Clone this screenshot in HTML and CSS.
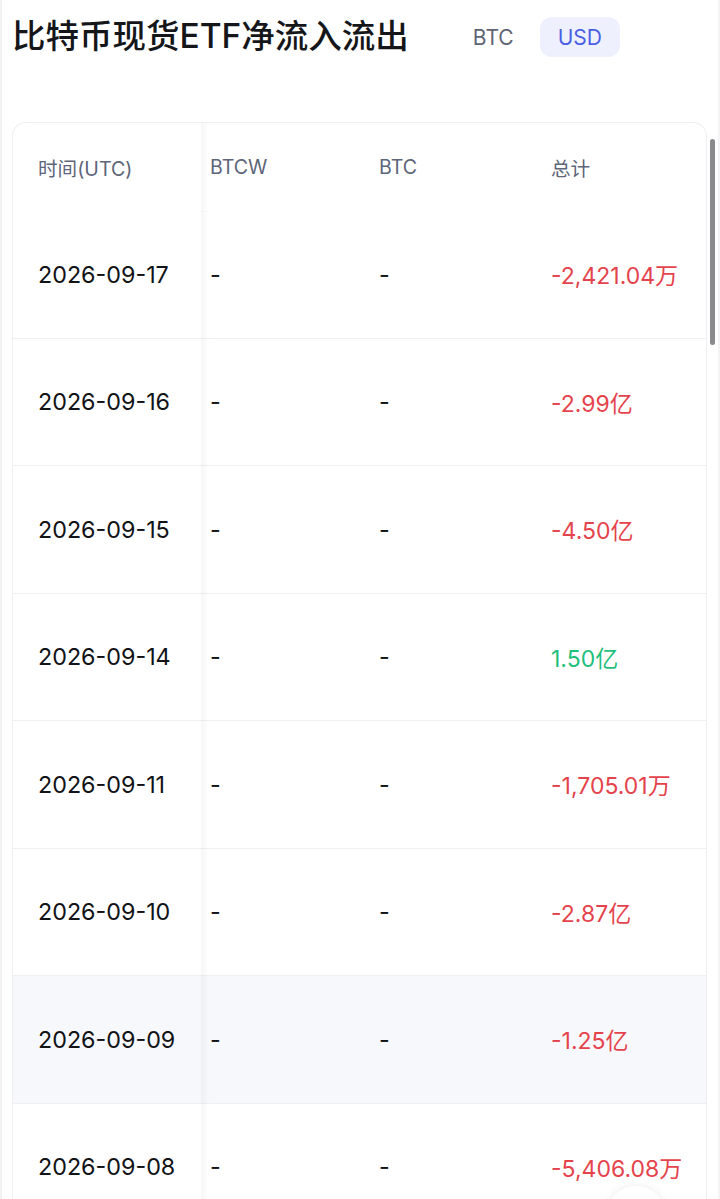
FILE: index.html
```html
<!DOCTYPE html>
<html lang="zh-CN">
<head>
<meta charset="utf-8">
<title>比特币现货ETF净流入流出</title>
<link rel="stylesheet" href="styles.css">
</head>
<body>
<div class="page">
  <header class="top">
    <h1 class="title">比特币现货ETF净流入流出</h1>
    <div class="switch">
      <span class="opt">BTC</span>
      <span class="opt active">USD</span>
    </div>
  </header>

  <div class="card-wrap">
    <div class="card">
      <table class="tbl">
        <colgroup>
          <col class="c1"><col class="c2"><col class="c3"><col class="c4">
        </colgroup>
        <thead>
          <tr>
            <th class="sticky">时间(UTC)</th>
            <th class="pl2">BTCW</th>
            <th>BTC</th>
            <th>总计</th>
          </tr>
        </thead>
        <tbody>
          <tr><td class="sticky">2026-09-17</td><td class="pl2">-</td><td>-</td><td class="neg">-2,421.04万</td></tr>
          <tr><td class="sticky">2026-09-16</td><td class="pl2">-</td><td>-</td><td class="neg">-2.99亿</td></tr>
          <tr><td class="sticky">2026-09-15</td><td class="pl2">-</td><td>-</td><td class="neg">-4.50亿</td></tr>
          <tr><td class="sticky">2026-09-14</td><td class="pl2">-</td><td>-</td><td class="pos">1.50亿</td></tr>
          <tr><td class="sticky">2026-09-11</td><td class="pl2">-</td><td>-</td><td class="neg">-1,705.01万</td></tr>
          <tr><td class="sticky">2026-09-10</td><td class="pl2">-</td><td>-</td><td class="neg">-2.87亿</td></tr>
          <tr class="hl"><td class="sticky">2026-09-09</td><td class="pl2">-</td><td>-</td><td class="neg">-1.25亿</td></tr>
          <tr><td class="sticky">2026-09-08</td><td class="pl2">-</td><td>-</td><td class="neg">-5,406.08万</td></tr>
        </tbody>
      </table>
    </div>
    <div class="scrollbar"></div>
  </div>
  <div class="fab"></div>
</div>
</body>
</html>
```

FILE: styles.css
```css
html, body {
  margin: 0;
  padding: 0;
  background: #ffffff;
}
body {
  font-family: Inter, "Noto Sans CJK SC", "Noto Sans", sans-serif;
  color: #121317;
  overflow: hidden;
}
.page {
  position: relative;
  height: 1199px;
  overflow: hidden;
  box-shadow: inset 2px 0 0 #f1f1f3, inset -2px 0 0 #f4f4f6;
}
.top {
  display: flex;
  align-items: center;
  height: 74px;
  padding-left: 12px;
}
.title {
  margin: 0;
  font-size: 33.5px;
  font-weight: 500;
  color: #15161a;
  letter-spacing: 0;
  line-height: 1;
}
.switch {
  display: flex;
  align-items: center;
  margin-left: 46px;
  gap: 8px;
}
.opt {
  display: inline-flex;
  align-items: center;
  justify-content: center;
  height: 40px;
  padding: 0 18px;
  border-radius: 12px;
  font-size: 21px;
  color: #5e6473;
}
.opt.active {
  background: #eef1fd;
  color: #4a5fe3;
}
.card-wrap {
  position: relative;
  margin-top: 48px;
  padding-left: 12px;
  padding-right: 13px;
}
.card {
  border: 1px solid #efeff2;
  border-bottom: none;
  border-radius: 14px 14px 0 0;
  overflow: hidden;
}
.tbl {
  width: 100%;
  border-collapse: collapse;
  table-layout: fixed;
}
.c1 { width: 188px; }
.c2 { width: 169px; }
.c3 { width: 172px; }
.tbl th {
  height: 88px;
  text-align: left;
  font-weight: 400;
  font-size: 19.6px;
  color: #5d6579;
  padding: 0 0 0 9px;
  vertical-align: middle;
}
.tbl td {
  height: 126.5px;
  padding: 0 0 0 9px;
  font-size: 23.3px;
  color: #121317;
  border-bottom: 1px solid #efeff2;
  vertical-align: middle;
  box-sizing: content-box;
}
.tbl th.sticky, .tbl td.sticky {
  position: relative;
  padding-left: 25px;
}
.tbl .sticky::after {
  content: "";
  position: absolute;
  top: 0;
  right: -8px;
  bottom: -1px;
  width: 8px;
  background: linear-gradient(to right, rgba(0, 0, 0, 0.035), rgba(0, 0, 0, 0));
  pointer-events: none;
}
.tbl .pl2 { padding-left: 9px; }
.tbl tr.hl td { background: #f7f8fc; }
.tbl td.neg { color: #e5434c; font-size: 23px; }
.tbl td.pos { color: #1fbf7c; font-size: 23px; }
.scrollbar {
  position: absolute;
  top: 17px;
  right: 5px;
  width: 5px;
  height: 206px;
  border-radius: 3px;
  background: #8a8a8c;
}
.fab {
  position: absolute;
  left: 606px;
  top: 1186px;
  width: 60px;
  height: 60px;
  border-radius: 50%;
  background: #ffffff;
  box-shadow: 0 0 10px rgba(0, 0, 0, 0.08);
}
```
